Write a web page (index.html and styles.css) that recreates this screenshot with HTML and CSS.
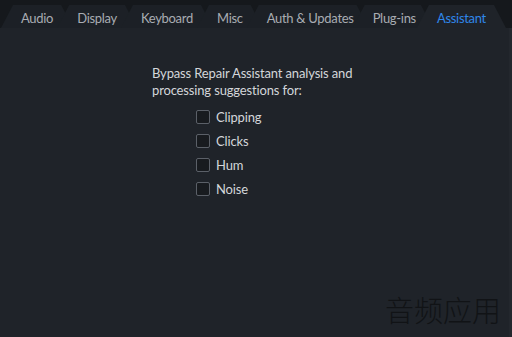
FILE: index.html
```html
<html>
    <head>
        <link rel="stylesheet" href="styles.css">
    </head>
    <body>
        <div class="window">
            <div class="tabbar">
                <div class="tab">Audio</div>
                <div class="tab">Display</div>
                <div class="tab">Keyboard</div>
                <div class="tab">Misc</div>
                <div class="tab tight">Auth &amp; Updates</div>
                <div class="tab narrow">Plug-ins</div>
                <div class="tab active">Assistant</div>
            </div>
            <div class="page">
                <div class="panel">
                    <p class="intro">Bypass Repair Assistant analysis and<br>processing suggestions for:</p>
                    <ul class="options">
                        <li><span class="box"></span>Clipping</li>
                        <li><span class="box"></span>Clicks</li>
                        <li><span class="box"></span>Hum</li>
                        <li><span class="box"></span>Noise</li>
                    </ul>
                </div>
            </div>
            <div class="watermark">音频应用</div>
        </div>
    </body>
</html>
```

FILE: styles.css
```css
body
{
    margin: 0;
    background-color: #1f2329;
    font-family: Lato, "Liberation Sans", sans-serif;
    font-size: 13px;
}
.window
{
    position: relative;
    width: 512px;
    height: 337px;
    display: flex;
    flex-direction: column;
    overflow: hidden;
}
.tabbar
{
    display: flex;
    align-items: flex-end;
    height: 28px;
    padding-left: 1px;
    background-color: #15181c;
}
.tab
{
    height: 23px;
    line-height: 27px;
    padding: 0 20px;
    margin-right: -16px;
    letter-spacing: -0.3px;
    color: #a8acb2;
    background-color: #1c2026;
    white-space: nowrap;
    clip-path: polygon(12px 0, calc(100% - 12px) 0, 100% 100%, 0 100%);
}
.tab.tight
{
    padding-right: 15px;
}
.tab.narrow
{
    padding-right: 17px;
}
.tab.active
{
    color: #2f87ea;
    background-color: #1f2329;
}
.page
{
    flex: 1;
    border-right: 3px solid #23272d;
}
.panel
{
    padding: 37px 0 0 152px;
    color: #d3d6da;
    letter-spacing: -0.15px;
}
.intro
{
    margin: 0;
    line-height: 17px;
}
.options
{
    list-style: none;
    margin: 6px 0 0 44px;
    padding: 0;
}
.options li
{
    display: flex;
    align-items: center;
    height: 24px;
}
.box
{
    width: 12px;
    height: 12px;
    margin-right: 6px;
    border: 1px solid #5b6068;
    border-radius: 2px;
    background-color: #181b1f;
}
.watermark
{
    position: absolute;
    right: 11px;
    bottom: 7px;
    font-family: "Noto Sans CJK SC", sans-serif;
    font-weight: 300;
    font-size: 29px;
    color: #111316;
}
```
